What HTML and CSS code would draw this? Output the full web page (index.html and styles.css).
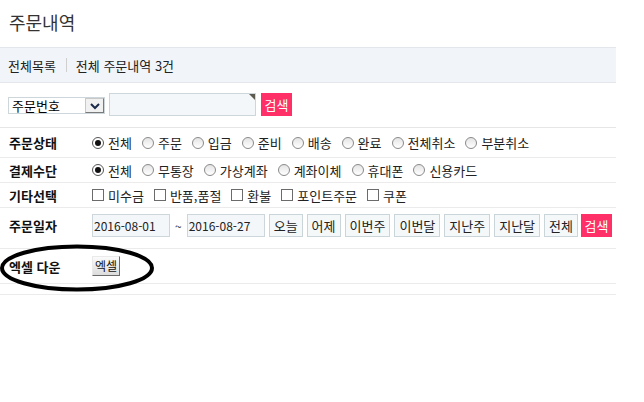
FILE: index.html
```html
<!DOCTYPE html>
<html lang="ko">
<head>
<meta charset="utf-8">
<link rel="stylesheet" href="styles.css">
</head>
<body>
<div class="page">
  <h1 class="title">주문내역</h1>
  <div class="crumb"><span>전체목록</span><span class="sep"></span><span>전체 주문내역 3건</span></div>

  <div class="search">
    <div class="select">
      <span class="select-text">주문번호</span>
      <span class="drop"><svg width="12" height="8" viewBox="0 0 12 8"><path d="M2 2 L6 6 L10 2" fill="none" stroke="#1c2a4a" stroke-width="2"/></svg></span>
    </div>
    <div class="keyword"><span class="corner"></span></div>
    <button class="btn-red">검색</button>
  </div>

  <div class="row r1">
    <div class="label">주문상태</div>
    <div class="opts">
      <label class="opt"><span class="radio on"></span>전체</label>
      <label class="opt"><span class="radio"></span>주문</label>
      <label class="opt"><span class="radio"></span>입금</label>
      <label class="opt"><span class="radio"></span>준비</label>
      <label class="opt"><span class="radio"></span>배송</label>
      <label class="opt"><span class="radio"></span>완료</label>
      <label class="opt"><span class="radio"></span>전체취소</label>
      <label class="opt"><span class="radio"></span>부분취소</label>
    </div>
  </div>

  <div class="row r2">
    <div class="label">결제수단</div>
    <div class="opts">
      <label class="opt"><span class="radio on"></span>전체</label>
      <label class="opt"><span class="radio"></span>무통장</label>
      <label class="opt"><span class="radio"></span>가상계좌</label>
      <label class="opt"><span class="radio"></span>계좌이체</label>
      <label class="opt"><span class="radio"></span>휴대폰</label>
      <label class="opt"><span class="radio"></span>신용카드</label>
    </div>
  </div>

  <div class="row r3">
    <div class="label">기타선택</div>
    <div class="opts">
      <label class="opt"><span class="check"></span>미수금</label>
      <label class="opt"><span class="check"></span>반품,품절</label>
      <label class="opt"><span class="check"></span>환불</label>
      <label class="opt"><span class="check"></span>포인트주문</label>
      <label class="opt"><span class="check"></span>쿠폰</label>
    </div>
  </div>

  <div class="row r4">
    <div class="label">주문일자</div>
    <div class="dates">
      <span class="date">2016-08-01</span>
      <span class="tilde">~</span>
      <span class="date">2016-08-27</span>
      <button class="btn">오늘</button>
      <button class="btn">어제</button>
      <button class="btn">이번주</button>
      <button class="btn">이번달</button>
      <button class="btn">지난주</button>
      <button class="btn">지난달</button>
      <button class="btn">전체</button>
      <button class="btn-red">검색</button>
    </div>
  </div>

  <div class="row r5">
    <div class="label">엑셀 다운</div>
    <button class="btn-old">엑셀</button>
  </div>

  <div class="spacer"></div>

  <svg class="circle" width="156" height="50" viewBox="0 0 156 50">
    <ellipse cx="77" cy="24" rx="75" ry="21.5" fill="none" stroke="#000" stroke-width="4"/>
  </svg>
</div>
</body>
</html>
```

FILE: styles.css
```css
* { box-sizing: border-box; }
body {
  margin: 0;
  background: #fff;
  font-family: "Noto Sans CJK KR", "Noto Sans", sans-serif;
  font-size: 13px;
  color: #222;
}
.page {
  position: relative;
  width: 616px;
}
.title {
  margin: 0;
  height: 47px;
  padding: 9px 0 0 9px;
  font-size: 18px;
  font-weight: normal;
  line-height: 26px;
  color: #333;
}
.crumb {
  height: 36px;
  background: #f1f4f8;
  border-top: 1px solid #e3e6ea;
  border-bottom: 1px solid #e3e6ea;
  display: flex;
  align-items: center;
  padding-left: 8px;
  color: #222;
}
.sep {
  width: 1px;
  height: 14px;
  background: #cfcfcf;
  margin: 0 9px 0 10px;
}
.search {
  height: 45px;
  border-bottom: 1px solid #e6e6e6;
  display: flex;
  align-items: flex-start;
  padding: 10px 0 0 8px;
}
.select {
  margin-top: 4px;
  width: 97px;
  height: 17px;
  border: 1px solid #cdd6da;
  display: flex;
  align-items: center;
  justify-content: space-between;
  padding: 0 0 0 3px;
  color: #000;
  background: #fff;
}
.select-text { line-height: 15px; }
.drop {
  width: 19px;
  height: 15px;
  border: 1px solid #8d8d8d;
  border-color: #c8c8c8 #7a7a7a #7a7a7a #c8c8c8;
  background: #f1f1f1;
  display: flex;
  align-items: center;
  justify-content: center;
}
.keyword {
  position: relative;
  margin-left: 4px;
  width: 147px;
  height: 23px;
  border: 1px solid #ccd6db;
  background: #f4f7f9;
}
.corner {
  position: absolute;
  top: 0;
  right: 0;
  width: 0;
  height: 0;
  border-top: 6px solid #5d5b50;
  border-left: 6px solid transparent;
}
.btn-red {
  margin-left: 5px;
  height: 23px;
  width: 31px;
  padding: 0;
  border: 0;
  background: #ff2f68;
  color: #fff;
  font-family: inherit;
  font-size: 13px;
}
.row {
  display: flex;
  align-items: center;
  padding-left: 9px;
  border-bottom: 1px solid #ebebeb;
}
.r1 { height: 30px; }
.r2 { height: 25px; }
.r3 { height: 25px; }
.r4 { height: 41px; align-items: flex-start; padding-top: 6px; }
.r4 .label { line-height: 23px; }
.r5 { height: 35px; }
.label {
  width: 83px;
  font-weight: bold;
  color: #111;
  flex: none;
}
.opts {
  display: flex;
  align-items: center;
}
.opt {
  display: inline-flex;
  align-items: center;
  margin-right: 10px;
  color: #222;
}
.radio {
  width: 12px;
  height: 12px;
  border-radius: 50%;
  border: 1px solid #8a8a8a;
  background: linear-gradient(#e4e4e4, #fff);
  margin-right: 4px;
  display: inline-flex;
  align-items: center;
  justify-content: center;
}
.radio.on { border-color: #555; background: #fff; }
.radio.on::after {
  content: "";
  width: 6px;
  height: 6px;
  border-radius: 50%;
  background: #111;
}
.check {
  width: 12px;
  height: 12px;
  border: 1px solid #6b6b6b;
  background: #fff;
  margin-right: 4px;
}
.dates {
  display: flex;
  align-items: center;
}
.date {
  width: 78px;
  height: 23px;
  border: 1px solid #ccd6db;
  background: #f4f7f9;
  line-height: 21px;
  padding-left: 1px;
  color: #222;
  font-size: 12px;
}
.tilde { margin: 0 5px 0 5px; color: #333; font-size: 12px; }
.btn {
  height: 23px;
  margin-left: 4px;
  padding: 0 4px;
  border: 1px solid #c9d5d8;
  background: #f4f8f9;
  color: #222;
  font-family: inherit;
  font-size: 13px;
}
.dates .btn-red { margin-left: 3px; width: 31px; }
.btn-old {
  height: 20px;
  padding: 0 2px;
  border: 1px solid;
  border-color: #eaeaea #6b6b6b #6b6b6b #eaeaea;
  background: linear-gradient(#fbfbfb, #dcdcdc);
  color: #111;
  font-family: inherit;
  font-size: 12px;
  line-height: 16px;
}
.spacer {
  height: 11px;
  border-bottom: 1px solid #ebebeb;
}
.circle {
  position: absolute;
  left: 0;
  top: 244px;
}
```
